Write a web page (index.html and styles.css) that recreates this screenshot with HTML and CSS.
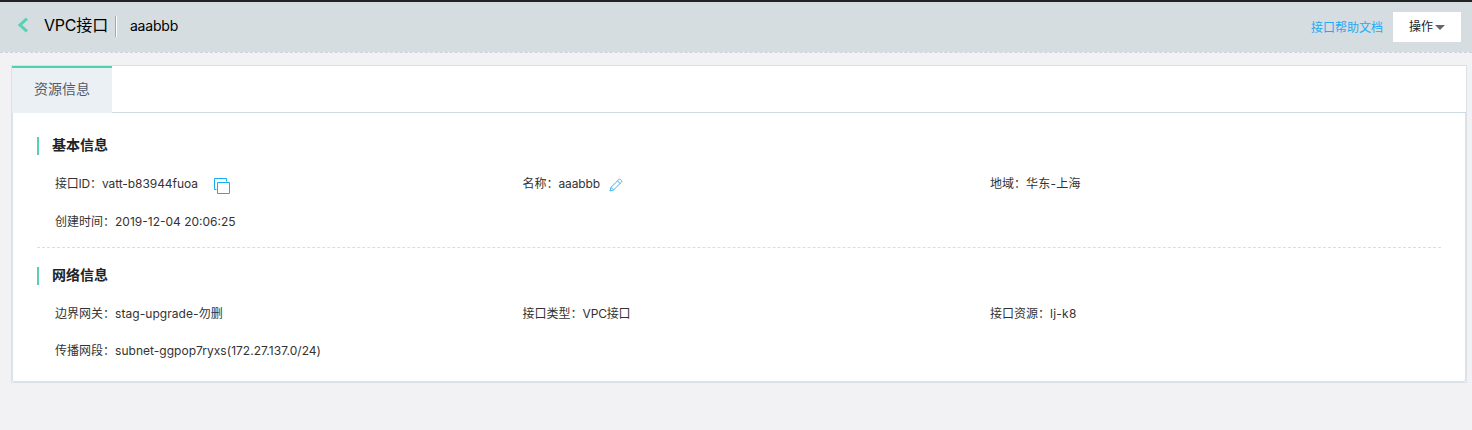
FILE: index.html
```html
<!DOCTYPE html>
<html lang="zh-CN">
<head>
<meta charset="utf-8">
<title>VPC接口</title>
<link rel="stylesheet" href="styles.css">
</head>
<body>
<header class="topbar">
  <svg class="back" width="12" height="16" viewBox="0 0 12 16"><path d="M10 1.6 3 8l7 6.4" fill="none" stroke="#57d3b4" stroke-width="3"/></svg>
  <h1 class="title">VPC接口</h1>
  <span class="divider"></span>
  <span class="name">aaabbb</span>
  <a class="help">接口帮助文档</a>
  <button class="action">操作<i class="caret"></i></button>
</header>
<main class="card">
  <nav class="tabs"><span class="tab">资源信息</span></nav>
  <div class="panel">
    <section class="section">
      <h2 class="heading">基本信息</h2>
      <div class="grid">
        <div class="item"><span class="label-id">接口ID：</span><span class="val id">vatt-b83944fuoa</span>
          <svg class="copy" width="16" height="16" viewBox="0 0 16 16" fill="none" stroke="#14aef5"><path d="M2.5 11.5h-2V.5h12v3M3.5 4.5h12v11h-12z"/></svg>
        </div>
        <div class="item">名称：<span class="val short">aaabbb</span>
          <svg class="edit" width="14" height="14" viewBox="0 0 14 14" fill="none" stroke="#3cb6f5" stroke-linejoin="round"><path d="M1 13l.9-3.600 7.900-7.800q.9-.8 1.800 0l.9.9q.7.8 0 1.600L4.500 12zM8.500 2.900l2.700 2.700M2 9.400l2.500 2.500"/></svg>
        </div>
        <div class="item">地域：<span class="val wide">华东-上海</span></div>
        <div class="item">创建时间：<span class="val">2019-12-04 20:06:25</span></div>
      </div>
    </section>
    <section class="section">
      <h2 class="heading">网络信息</h2>
      <div class="grid">
        <div class="item">边界网关：<span class="val loose">stag-upgrade-勿删</span></div>
        <div class="item">接口类型：<span class="val short">VPC接口</span></div>
        <div class="item">接口资源：<span class="val wide">lj-k8</span></div>
        <div class="item">传播网段：<span class="val subnet">subnet-ggpop7ryxs(172.27.137.0/24)</span></div>
      </div>
    </section>
  </div>
</main>
</body>
</html>
```
FILE: styles.css
```css
* { box-sizing: border-box; }
body {
  margin: 0;
  min-height: 430px;
  background: #f2f2f4;
  color: #333;
  font: 12px/18px Inter, "Noto Sans CJK SC", sans-serif;
}
.topbar {
  display: flex;
  align-items: center;
  height: 53px;
  padding: 0 11px 0 17px;
  border-top: 2px solid #222;
  border-bottom: 1px dashed #c9d5e2;
  background: #d5dde0;
  background-clip: padding-box;
  color: #000;
}
.back { margin-top: -4px; }
.title {
  margin: -4px 0 0 15px;
  font-size: 16px;
  font-weight: 400;
  line-height: 24px;
  letter-spacing: -0.2px;
}
.divider {
  width: 2px;
  height: 21px;
  margin: -1px 13px 0 7px;
  border-left: 1px solid #a2a8ac;
  border-right: 1px solid #fff;
}
.name { font-size: 14px; margin-top: -2px; letter-spacing: -0.2px; }
.help { margin: 1px 0 0 auto; color: #22aaf5; }
.action {
  display: flex;
  align-items: center;
  justify-content: center;
  width: 68px;
  height: 30px;
  margin-left: 10px;
  padding: 0;
  border: 0;
  background: #fff;
  color: #222;
  font: inherit;
}
.caret {
  margin: 1px 0 0 2px;
  border: 5px solid transparent;
  border-top-color: #666;
  border-bottom: 0;
}
.card {
  width: 1456px;
  height: 318px;
  margin: 12px 0 0 11px;
  border: 1px solid #d8e2e8;
  background: #fff;
}
.tabs { display: flex; height: 47px; border-bottom: 1px solid #cedae2; }
.tab {
  width: 100px;
  height: 47px;
  border-top: 2px solid #4fd2b4;
  background: #ebf0f5;
  color: #555a66;
  font-size: 14px;
  line-height: 42px;
  text-align: center;
}
.panel {
  height: 269px;
  padding: 24px 24px 0;
  border: 1px solid #d8e2e8;
  border-top: 0;
  border-radius: 0 0 3px 3px;
}
.section + .section { margin-top: 19px; }
.section:first-child {
  height: 111px;
  border-bottom: 1px dashed #dadee2;
}
.heading {
  height: 18px;
  margin: 0;
  padding-left: 13px;
  border-left: 2px solid #57d0b4;
  color: #222;
  font-size: 14px;
  font-weight: 700;
  line-height: 15px;
}
.grid {
  display: grid;
  grid-template-columns: repeat(3, 467.5px);
  grid-auto-rows: 18px;
  row-gap: 20px;
  padding: 20px 0 0 18px;
}
.section + .section .grid { row-gap: 19px; }
.item { display: flex; align-items: center; white-space: nowrap; }
.label-id { letter-spacing: -0.2px; }
.id { letter-spacing: -0.07px; }
.short { letter-spacing: -0.15px; }
.wide { letter-spacing: 0.25px; }
.loose { letter-spacing: 0.06px; }
.subnet { letter-spacing: 0.03px; }
.copy { margin: 4px 0 0 16px; }
.edit { margin: 2px 0 0 9px; }
```
